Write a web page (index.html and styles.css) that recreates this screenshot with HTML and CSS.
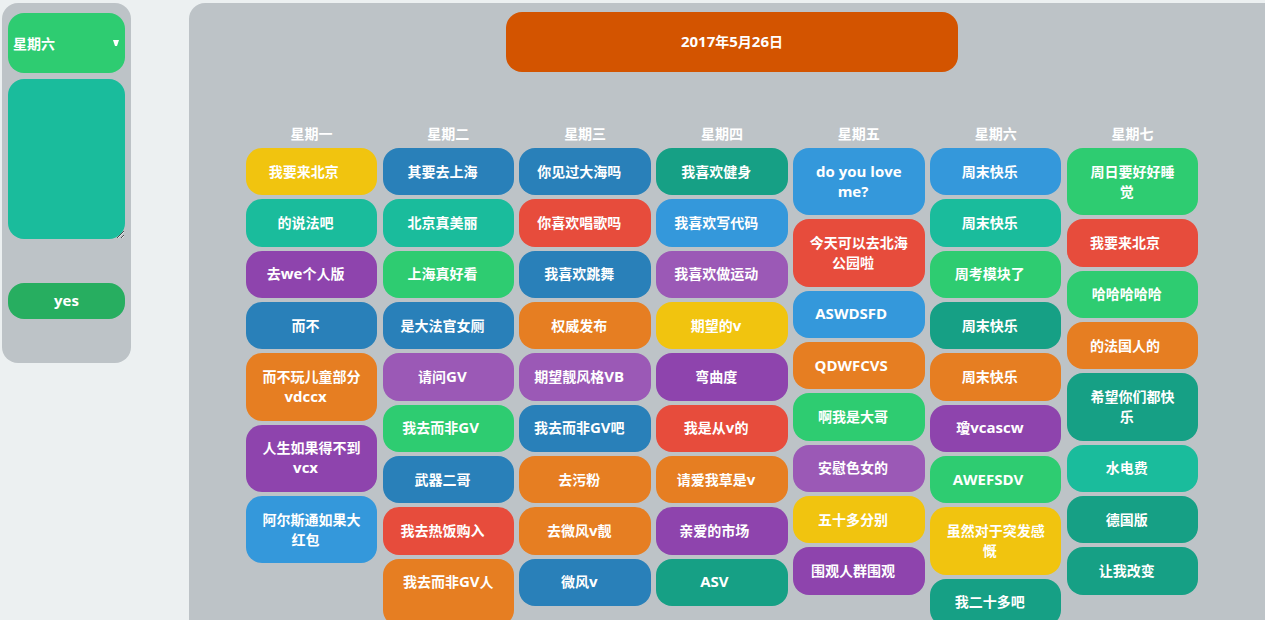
FILE: index.html
```html
<!DOCTYPE html>
<html lang="zh-CN">
<head>
<meta charset="utf-8">
<title>2017年5月26日</title>
<link rel="stylesheet" href="styles.css">
</head>
<body>
<form class="panel">
  <select class="day-select" aria-label="星期"><option>星期一</option><option>星期二</option><option>星期三</option><option>星期四</option><option>星期五</option><option selected>星期六</option><option>星期七</option></select>
  <textarea class="note" aria-label="内容"></textarea>
  <button class="submit" type="button">yes</button>
</form>
<main class="board">
  <h1 class="date"><span class="latin">2017</span>年<span class="latin">5</span>月<span class="latin">26</span>日</h1>
  <div class="week">
    <section class="day">
      <h2 class="day-name">星期一</h2>
      <div class="card yellow">我要来北京 </div>
      <div class="card teal">的说法吧</div>
      <div class="card violet">去<span class="latin">we</span>个人版</div>
      <div class="card blue">而不</div>
      <div class="card orange">而不玩儿童部分<span class="latin">vdccx</span></div>
      <div class="card violet">人生如果得不到<span class="latin">vcx</span></div>
      <div class="card sky">阿尔斯通如果大红包</div>
    </section>
    <section class="day">
      <h2 class="day-name">星期二</h2>
      <div class="card blue">其要去上海</div>
      <div class="card teal">北京真美丽</div>
      <div class="card green">上海真好看</div>
      <div class="card blue">是大法官女厕</div>
      <div class="card purple">请问<span class="latin">GV</span></div>
      <div class="card green">我去而非<span class="latin">GV</span> </div>
      <div class="card blue">武器二哥</div>
      <div class="card red">我去热饭购入</div>
      <div class="card orange">我去而非<span class="latin">GV</span>人 </div>
    </section>
    <section class="day">
      <h2 class="day-name">星期三</h2>
      <div class="card blue">你见过大海吗</div>
      <div class="card red">你喜欢唱歌吗</div>
      <div class="card blue">我喜欢跳舞</div>
      <div class="card orange">权威发布</div>
      <div class="card purple">期望靓风格<span class="latin">VB</span></div>
      <div class="card blue">我去而非<span class="latin">GV</span>吧</div>
      <div class="card orange">去污粉</div>
      <div class="card orange">去微风<span class="latin">v</span>靓</div>
      <div class="card blue">微风<span class="latin">v</span></div>
    </section>
    <section class="day">
      <h2 class="day-name">星期四</h2>
      <div class="card sea">我喜欢健身</div>
      <div class="card sky">我喜欢写代码</div>
      <div class="card purple">我喜欢做运动</div>
      <div class="card yellow">期望的<span class="latin">v</span></div>
      <div class="card violet">弯曲度</div>
      <div class="card red">我是从<span class="latin">v</span>的</div>
      <div class="card orange">请爱我草是<span class="latin">v</span></div>
      <div class="card violet">亲爱的市场 </div>
      <div class="card sea"><span class="latin">ASV</span> </div>
    </section>
    <section class="day">
      <h2 class="day-name">星期五</h2>
      <div class="card sky"><span class="latin">do you love me?</span></div>
      <div class="card red">今天可以去北海公园啦</div>
      <div class="card sky"><span class="latin">ASWDSFD</span> </div>
      <div class="card orange"><span class="latin">QDWFCVS</span> </div>
      <div class="card green">啊我是大哥</div>
      <div class="card purple">安慰色女的</div>
      <div class="card yellow">五十多分别</div>
      <div class="card violet">围观人群围观</div>
    </section>
    <section class="day">
      <h2 class="day-name">星期六</h2>
      <div class="card sky">周末快乐</div>
      <div class="card teal">周末快乐</div>
      <div class="card green">周考模块了</div>
      <div class="card sea">周末快乐</div>
      <div class="card orange">周末快乐</div>
      <div class="card violet">瓊<span class="latin">vcascw</span></div>
      <div class="card green"><span class="latin">AWEFSDV</span> </div>
      <div class="card yellow">虽然对于突发感慨</div>
      <div class="card sea">我二十多吧</div>
    </section>
    <section class="day">
      <h2 class="day-name">星期七</h2>
      <div class="card green">周日要好好睡觉</div>
      <div class="card red">我要来北京 </div>
      <div class="card green">哈哈哈哈哈</div>
      <div class="card orange">的法国人的 </div>
      <div class="card sea">希望你们都快乐</div>
      <div class="card teal">水电费</div>
      <div class="card sea">德国版</div>
      <div class="card sea">让我改变</div>
    </section>
  </div>
</main>
</body>
</html>
```
FILE: styles.css
```css
* { box-sizing: border-box; }

body {
  margin: 0;
  padding: 3px 0 0 2px;
  display: flex;
  align-items: flex-start;
  gap: 58px;
  background: #ecf0f1;
  color: #fff;
  font: bold 14px/20px "Open Sans", "Noto Sans CJK SC", sans-serif;
}

.latin { font-size: 15px; line-height: 1; }

.panel {
  flex: 0 0 129px;
  display: flex;
  flex-direction: column;
  padding: 10px 6px 44px;
  border-radius: 16px;
  background: #bdc3c7;
}

.day-select,
.note,
.submit {
  width: 100%;
  border: 0;
  border-radius: 16px;
  color: inherit;
  font: inherit;
  outline: 0;
}

.day-select {
  height: 60px;
  padding: 2px 5px 0;
  appearance: none;
  background: url("data:image/svg+xml,%3Csvg xmlns='http://www.w3.org/2000/svg' width='6' height='6'%3E%3Cpath d='M0 0h6L4 6H2z' fill='white'/%3E%3C/svg%3E") no-repeat right 6px top 27px #2ecc71;
}

.note {
  height: 160px;
  margin: 6px 0 44px;
  padding: 6px;
  background: #1abc9c;
}

.submit {
  height: 36px;
  padding: 0 0 2px;
  background: #27ae60;
  font-size: 15px;
}

.board {
  flex: 1;
  min-width: 0;
  padding: 9px 44px 32px 54px;
  border-radius: 16px 0 0;
  background: #bdc3c7;
}

.date {
  width: 452px;
  max-width: 100%;
  margin: 0 auto 52px;
  padding: 20px;
  border-radius: 16px;
  background: #d35400;
  font-size: 14px;
  line-height: 20px;
  text-align: center;
}

.week {
  display: grid;
  grid-template-columns: repeat(7, 1fr);
  margin-right: 20px;
}

.day { min-width: 0; }

.day-name {
  margin: 0 0 4px;
  font-size: 14px;
  line-height: 20px;
  text-align: center;
}

.card {
  margin: 0 2% 4px;
  padding: 10%;
  border-radius: 16px;
  text-align: center;
}

.card::after { content: "\a0\a0\a0"; font-size: 15px; line-height: 1; }

.yellow { background: #f1c40f; }
.teal { background: #1abc9c; }
.sea { background: #16a085; }
.green { background: #2ecc71; }
.sky { background: #3498db; }
.blue { background: #2980b9; }
.purple { background: #9b59b6; }
.violet { background: #8e44ad; }
.orange { background: #e67e22; }
.red { background: #e74c3c; }
```
